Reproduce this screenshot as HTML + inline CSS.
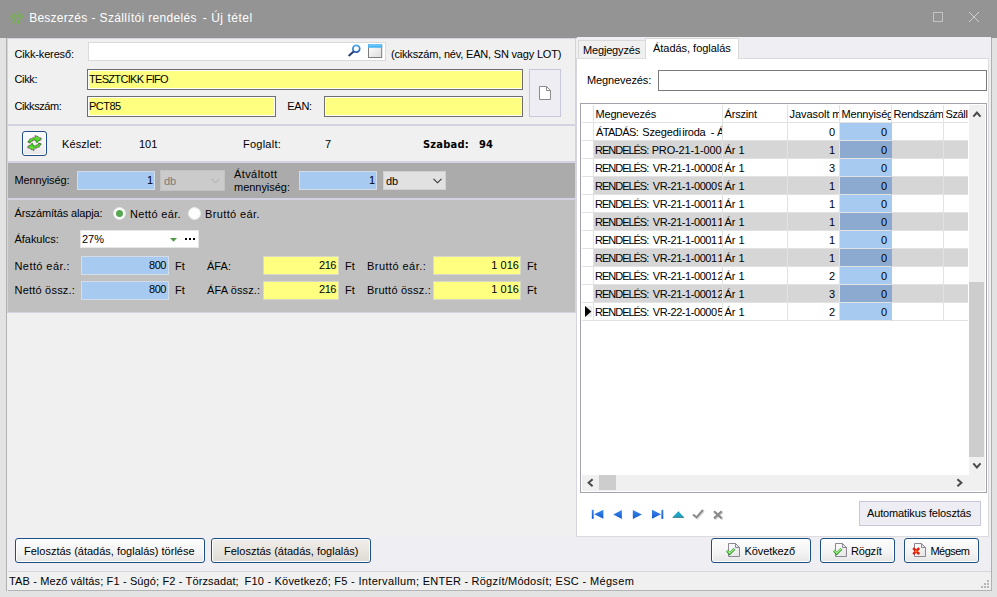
<!DOCTYPE html>
<html lang="hu"><head><meta charset="utf-8"><title>Beszerzés - Szállítói rendelés - Új tétel</title>
<style>
*{box-sizing:border-box;margin:0;padding:0}
html,body{width:997px;height:597px;overflow:hidden}
body{position:relative;background:#e3e3e3;font-family:"Liberation Sans","DejaVu Sans",sans-serif;font-size:11px;color:#000;line-height:13px}
.a{position:absolute}
.t{position:absolute;white-space:nowrap;line-height:13px;height:13px}
.b{font-weight:bold;font-family:"DejaVu Sans Condensed","Liberation Sans",sans-serif}
.r{text-align:right}
#title{left:0;top:0;width:997px;height:38px;background:#949494}
#title .cap{left:30px;top:10px;font-size:12px;color:#fff;line-height:16px;height:16px;}
#client{left:6px;top:38px;width:986px;height:553px;background:#f0f0f0;border-left:1px solid #b0b0b0;border-right:1px solid #b0b0b0}
.pan{position:absolute;border:1px solid #d3d3e3}
.inp{position:absolute;border:1px solid #d9d9d9;background:#fff}
.yel{background:#ffff80;border:1px solid #6e6e6e;box-shadow:inset 0 0 0 1px #fff}
.yel2{background:#ffff80;border:1px solid #d8d8c8}
.blu{background:#a6caf0;border:1px solid #d4dce8}
.btn{position:absolute;border:1px solid #1f4e82;border-radius:3px;background:linear-gradient(#fdfdfd,#f3f3f3 60%,#e6e6e6);box-shadow:inset 0 0 0 1px #fff}
.gh{height:18px;line-height:18px;padding:0 0 0 1.5px;white-space:nowrap;overflow:hidden;border-right:1px solid #e2e2e2;border-bottom:1px solid #e2e2e2}
.gc{line-height:17px;height:18px;padding:1px 0 0 1.5px;white-space:nowrap;overflow:hidden;border-right:1px solid #e2e2e2;border-bottom:1px solid #e2e2e2}
</style></head><body>
<div id="title" class="a">
 <svg class="a" style="left:8px;top:10px" width="18" height="16" viewBox="0 0 18 16"><g fill="none" stroke="#72b446" stroke-width="1.35" stroke-linecap="round"><path d="M4.3 4.1 Q9.1 8.6 13.9 3.9"/><path d="M2.9 6.4 Q7.9 7.6 7.3 13.4"/><path d="M15.1 6.4 Q10.1 7.6 10.6 13.4"/></g><g fill="#72b446"><circle cx="7.6" cy="2.4" r=".75"/><circle cx="10.7" cy="2.4" r=".75"/><circle cx="3" cy="9.7" r=".75"/><circle cx="4.6" cy="12.2" r=".75"/><circle cx="15.2" cy="9.8" r=".75"/><circle cx="13.5" cy="12.4" r=".75"/></g></svg>
 <span class="t cap" style="letter-spacing:0.24px;left:29.2px">Beszerzés</span> <span class="t cap" style="letter-spacing:0.33px;left:91.6px">- Szállítói rendelés</span> <span class="t cap" style="letter-spacing:0.52px;left:202.8px">- Új tétel</span>
 <div class="a" style="left:933px;top:12px;width:10px;height:10px;border:1px solid #c4c4c4"></div>
 <svg class="a" style="left:968px;top:11px" width="12" height="12" viewBox="0 0 12 12"><path d="M1 1 L11 11 M11 1 L1 11" stroke="#cfcfcf" stroke-width="1" fill="none"/></svg>
</div>
<div id="client" class="a"></div>
<div class="a" style="left:8px;top:537px;width:983px;height:34px;background:#eeeef3"></div>
<!-- LEFT -->
<div id="left" class="a" style="left:8px;top:37px;width:569px;height:534px">
 <div class="pan" style="left:-1px;top:1px;width:569px;height:87px"></div>
 <div class="pan" style="left:-1px;top:88px;width:569px;height:37px"></div>
 <div class="pan" style="left:-1px;top:125px;width:569px;height:37px;background:#ababab"></div>
 <div class="pan" style="left:-1px;top:162px;width:569px;height:114px;background:#c0c0c0"></div>
 <span class="t" style="letter-spacing:-0.15px;left:6.5px;top:11px">Cikk-kereső:</span>
 <div class="inp" style="left:80px;top:5px;width:298px;height:19px;border-color:#dadada"></div>
 <svg class="a" style="left:340px;top:7px" width="14" height="13" viewBox="0 0 14 13"><defs><linearGradient id="mg" x1="0" y1="0" x2="0" y2="1"><stop offset="0" stop-color="#48a8e8"/><stop offset="1" stop-color="#2456b0"/></linearGradient></defs><path d="M5.6 7.6 L1.2 11.4" stroke="#223a78" stroke-width="2" stroke-linecap="round"/><circle cx="8.3" cy="4.8" r="3.4" fill="#fff" stroke="url(#mg)" stroke-width="1.7"/></svg>
 <svg class="a" style="left:360px;top:7px" width="15" height="14" viewBox="0 0 15 14"><defs><linearGradient id="wg" x1="0" y1="0" x2="1" y2="1"><stop offset="0" stop-color="#fff"/><stop offset="1" stop-color="#dcdcdc"/></linearGradient></defs><rect x=".5" y=".5" width="13.2" height="13" fill="url(#wg)" stroke="#7c7c7c"/><path d="M0 1.2 Q0 0 1.2 0 H13 Q14.2 0 14.2 1.2 V3.8 H0 Z" fill="#4ab4f2"/><path d="M.6 1 H13.6" stroke="#8fd4fa" stroke-width="1"/></svg>
 <span class="t" style="letter-spacing:-0.19px;left:383px;top:11px;">(cikkszám, név, EAN, SN vagy LOT)</span>
 <span class="t" style="letter-spacing:-0.35px;left:6.5px;top:36px">Cikk:</span>
 <div class="inp yel" style="left:79px;top:32px;width:436px;height:21px"></div>
 <span class="t" style="letter-spacing:-0.69px;left:81px;top:36px">TESZTCIKK FIFO</span>
 <span class="t" style="letter-spacing:-0.44px;left:6.5px;top:63px">Cikkszám:</span>
 <div class="inp yel" style="left:79px;top:59px;width:189px;height:21px"></div>
 <span class="t" style="letter-spacing:-0.5px;left:81px;top:63px">PCT85</span>
 <span class="t" style="letter-spacing:-0.23px;left:279.2px;top:63px">EAN:</span>
 <div class="inp yel" style="left:316px;top:59px;width:199px;height:21px"></div>
 <div class="a" style="left:521px;top:32px;width:32px;height:48px;background:#ededf3;border:1px solid #c8c8dc"></div>
 <svg class="a" style="left:531px;top:49px" width="12" height="14" viewBox="0 0 12 14"><path d="M.5 .5 H7.5 L11.5 4.5 V13.5 H.5 Z" fill="#fff" stroke="#8a8a8a"/><path d="M7.5 .5 V4.5 H11.5" fill="none" stroke="#8a8a8a"/></svg>
 <div class="btn" style="left:14px;top:94px;width:25px;height:25px"></div>
 <svg class="a" style="left:19px;top:98px" width="16" height="17" viewBox="0 0 16 17"><defs><linearGradient id="rg" x1="0" y1="0" x2="0" y2="1"><stop offset="0" stop-color="#86f04a"/><stop offset="1" stop-color="#34c414"/></linearGradient></defs><g stroke-linejoin="round"><path d="M1.3 7.4 C1.4 4.4 4.4 2.9 8.3 2.9 V0.5 L14.6 3.9 L9.4 7.6 L8.6 5 C6.4 4.9 4.4 5.6 3.5 7.6 Z" fill="none" stroke="#e828d8" stroke-width="1.7" stroke-dasharray="1 2.4"/><path d="M1.3 7.4 C1.4 4.4 4.4 2.9 8.3 2.9 V0.5 L14.6 3.9 L9.4 7.6 L8.6 5 C6.4 4.9 4.4 5.6 3.5 7.6 Z" fill="none" stroke="#e828d8" stroke-width="1.7" stroke-dasharray="1 2.4" transform="rotate(180 7.5 8)"/><path d="M1.3 7.4 C1.4 4.4 4.4 2.9 8.3 2.9 V0.5 L14.6 3.9 L9.4 7.6 L8.6 5 C6.4 4.9 4.4 5.6 3.5 7.6 Z" fill="url(#rg)" stroke="#237d14" stroke-width=".7"/><path d="M1.3 7.4 C1.4 4.4 4.4 2.9 8.3 2.9 V0.5 L14.6 3.9 L9.4 7.6 L8.6 5 C6.4 4.9 4.4 5.6 3.5 7.6 Z" fill="url(#rg)" stroke="#237d14" stroke-width=".7" transform="rotate(180 7.5 8)"/></g></svg>
 <span class="t" style="letter-spacing:0.1px;left:54px;top:101px">Készlet:</span>
 <span class="t" style="left:131px;top:101px">101</span>
 <span class="t" style="letter-spacing:0.24px;left:235px;top:101px">Foglalt:</span>
 <span class="t" style="left:317px;top:101px">7</span>
 <span class="t b" style="letter-spacing:0.23px;left:415px;top:101px">Szabad:</span>
 <span class="t b" style="letter-spacing:0.2px;left:471px;top:101px">94</span>
 <span class="t" style="letter-spacing:-0.14px;left:6.5px;top:137px">Mennyiség:</span>
 <div class="inp blu" style="left:69px;top:134px;width:78px;height:19px"></div>
 <span class="t r" style="left:69px;top:137px;width:76px">1</span>
 <div class="inp" style="left:152px;top:133px;width:65px;height:21px;background:#cbcbcb;border-color:#c2c2c2"></div>
 <span class="t" style="left:156px;top:138px;color:#7a7a7a">db</span>
 <svg class="a" style="left:203px;top:141px" width="9" height="6" viewBox="0 0 9 6"><path d="M.5 .8 L4.5 4.8 L8.5 .8" fill="none" stroke="#a8a8a8" stroke-width="1"/></svg>
 <span class="t" style="letter-spacing:0.41px;left:226px;top:131px">Átváltott</span>
 <span class="t" style="letter-spacing:-0.03px;left:226px;top:144px">mennyiség:</span>
 <div class="inp blu" style="left:291px;top:134px;width:78px;height:19px"></div>
 <span class="t r" style="left:291px;top:137px;width:76px">1</span>
 <div class="inp" style="left:375px;top:134px;width:63px;height:19px;background:#e1e1e1;border-color:#d0d0d0"></div>
 <span class="t" style="left:378px;top:138px">db</span>
 <svg class="a" style="left:425px;top:141px" width="9" height="6" viewBox="0 0 9 6"><path d="M.5 .8 L4.5 4.8 L8.5 .8" fill="none" stroke="#333" stroke-width="1.1"/></svg>
 <span class="t" style="letter-spacing:-0.14px;left:6.5px;top:170px">Árszámítás alapja:</span>
 <div class="a" style="left:105px;top:170px;width:13px;height:13px;border-radius:50%;background:#fff;border:1px solid #dfe8df"></div>
 <div class="a" style="left:108px;top:173px;width:7px;height:7px;border-radius:50%;background:#55a84f"></div>
 <span class="t" style="letter-spacing:0.33px;left:122px;top:171px;">Nettó eár.</span>
 <div class="a" style="left:180px;top:170px;width:13px;height:13px;border-radius:50%;background:#fff;border:1px solid #e3ece3"></div>
 <span class="t" style="letter-spacing:0.37px;left:197px;top:171px;">Bruttó eár.</span>
 <span class="t" style="letter-spacing:-0.04px;left:6.5px;top:196px">Áfakulcs:</span>
 <div class="inp" style="left:72px;top:193px;width:119px;height:18px;border-color:#e6e6e6"></div>
 <span class="t" style="letter-spacing:-0.05px;left:74px;top:196px">27%</span>
 <svg class="a" style="left:162px;top:201px" width="7" height="4" viewBox="0 0 7 4"><path d="M0 0 H7 L3.5 3.8 Z" fill="#4e9a46"/></svg>
 <div class="a" style="left:177px;top:201px;width:2px;height:2px;background:#000;box-shadow:4px 0 #000,8px 0 #000"></div>
 <span class="t" style="letter-spacing:0.42px;left:6.5px;top:223px">Nettó eár.:</span>
 <div class="inp blu" style="left:73px;top:219px;width:88px;height:19px"></div>
 <span class="t r" style="letter-spacing:-0.45px;left:73px;top:222px;width:85px">800</span>
 <span class="t" style="left:167px;top:223px">Ft</span>
 <span class="t" style="letter-spacing:0.03px;left:199px;top:223px">ÁFA:</span>
 <div class="inp yel2" style="left:255px;top:219px;width:76px;height:19px"></div>
 <span class="t r" style="letter-spacing:-0.45px;left:255px;top:222px;width:73px">216</span>
 <span class="t" style="left:337px;top:223px">Ft</span>
 <span class="t" style="letter-spacing:0.45px;left:359px;top:223px">Bruttó eár.:</span>
 <div class="inp yel2" style="left:425px;top:219px;width:88px;height:19px"></div>
 <span class="t r" style="letter-spacing:0.03px;left:425px;top:222px;width:86px">1 016</span>
 <span class="t" style="left:519px;top:223px">Ft</span>
 <span class="t" style="letter-spacing:0.21px;left:6.5px;top:247px">Nettó össz.:</span>
 <div class="inp blu" style="left:73px;top:244px;width:88px;height:19px"></div>
 <span class="t r" style="letter-spacing:-0.45px;left:73px;top:246px;width:85px">800</span>
 <span class="t" style="left:167px;top:247px">Ft</span>
 <span class="t" style="letter-spacing:0.12px;left:199px;top:247px">ÁFA össz.:</span>
 <div class="inp yel2" style="left:255px;top:244px;width:76px;height:19px"></div>
 <span class="t r" style="letter-spacing:-0.45px;left:255px;top:246px;width:73px">216</span>
 <span class="t" style="left:337px;top:247px">Ft</span>
 <span class="t" style="letter-spacing:0.23px;left:359px;top:247px">Bruttó össz.:</span>
 <div class="inp yel2" style="left:425px;top:244px;width:88px;height:19px"></div>
 <span class="t r" style="letter-spacing:0.03px;left:425px;top:246px;width:86px">1 016</span>
 <span class="t" style="left:519px;top:247px">Ft</span>
</div>
<!-- RIGHT -->
<div id="right" class="a" style="left:577px;top:37px;width:414px;height:534px">
<div class="a" style="left:0;top:0;width:414px;height:22px;background:#eeeef3"></div>
<div class="a" style="left:-1px;top:21px;width:413px;height:479px;background:#fff;border:1px solid #dcdcdc;border-left-color:#d6d6e2"></div>
<div class="a" style="left:1px;top:3px;width:68px;height:18px;background:#f0f0f0;border:1px solid #d9d9d9;border-bottom:none"></div>
<span class="t" style="letter-spacing:-0.17px;left:6px;top:7px">Megjegyzés</span>
<div class="a" style="left:68px;top:1px;width:94px;height:21px;background:#fff;border:1px solid #d9d9d9;border-bottom:none"></div>
<span class="t" style="letter-spacing:-0.03px;left:76px;top:5px">Átadás, foglalás</span>
<span class="t" style="letter-spacing:-0.12px;left:10px;top:37px">Megnevezés:</span>
<div class="inp" style="left:81px;top:33px;width:329px;height:21px;border-color:#7a7a7a"></div>
<!--GRID-->
<div id="grid" class="a" style="left:3px;top:66px;width:407px;height:390px;background:#fff;border:1px solid #a3a3ad;overflow:hidden">
<div class="a gh" style="left:1px;top:1px;width:12px"></div>
<div class="a gh" style="letter-spacing:-0.18px;left:13px;top:1px;width:129px">Megnevezés</div>
<div class="a gh" style="letter-spacing:-0.17px;left:142px;top:1px;width:65px">Árszint</div>
<div class="a gh" style="letter-spacing:-0.06px;left:207px;top:1px;width:52px">Javasolt m</div>
<div class="a gh" style="letter-spacing:-0.19px;left:259px;top:1px;width:52px">Mennyiség</div>
<div class="a gh" style="letter-spacing:-0.31px;left:311px;top:1px;width:52px">Rendszám</div>
<div class="a gh" style="letter-spacing:-0.38px;left:363px;top:1px;width:24px;border-right:none">Száll</div>
<div class="a" style="left:13px;top:19px;width:374px;height:17px;background:#fff"></div>
<div class="a gc" style="left:1px;top:19px;width:12px"></div>
<div class="a gc" style="left:13px;top:19px;width:129px"><span class="t" style="letter-spacing:-0.57px;left:1.9px;top:3px">ÁTADÁS:</span> <span class="t" style="letter-spacing:-0.13px;left:48.2px;top:3px">Szegedi</span> <span class="t" style="letter-spacing:-0.28px;left:88.3px;top:3px">iroda</span> <span class="t" style="left:116.8px;top:3px">-</span> <span class="t" style="left:123.1px;top:3px">Á</span></div>
<div class="a gc" style="left:142px;top:19px;width:65px"></div>
<div class="a gc r" style="left:207px;top:19px;width:52px;padding-right:4px">0</div>
<div class="a gc r" style="left:259px;top:19px;width:52px;padding-right:4px;background:#a6caf0;border-right-color:#a6caf0">0</div>
<div class="a gc" style="left:311px;top:19px;width:52px"></div>
<div class="a gc" style="left:363px;top:19px;width:24px;border-right:none"></div>
<div class="a" style="left:13px;top:37px;width:374px;height:17px;background:#d6d6d6"></div>
<div class="a gc" style="left:1px;top:37px;width:12px"></div>
<div class="a gc" style="left:13px;top:37px;width:129px"><span class="t" style="letter-spacing:-1.03px;left:1.1px;top:3px">RENDELÉS:</span> <span class="t" style="letter-spacing:-0.15px;left:57.7px;top:3px">PRO-21-1-000</span></div>
<div class="a gc" style="letter-spacing:0.0px;left:142px;top:37px;width:65px">Ár 1</div>
<div class="a gc r" style="left:207px;top:37px;width:52px;padding-right:4px">1</div>
<div class="a gc r" style="left:259px;top:37px;width:52px;padding-right:4px;background:#8caad0;border-right-color:#8caad0">0</div>
<div class="a gc" style="left:311px;top:37px;width:52px"></div>
<div class="a gc" style="left:363px;top:37px;width:24px;border-right:none"></div>
<div class="a" style="left:13px;top:55px;width:374px;height:17px;background:#fff"></div>
<div class="a gc" style="left:1px;top:55px;width:12px"></div>
<div class="a gc" style="left:13px;top:55px;width:129px"><span class="t" style="letter-spacing:-1.03px;left:1.1px;top:3px">RENDELÉS:</span> <span class="t" style="letter-spacing:-0.43px;left:58.8px;top:3px">VR-21-1-0000</span><span class="t" style="left:123.4px;top:3px">8</span></div>
<div class="a gc" style="letter-spacing:0.0px;left:142px;top:55px;width:65px">Ár 1</div>
<div class="a gc r" style="left:207px;top:55px;width:52px;padding-right:4px">3</div>
<div class="a gc r" style="left:259px;top:55px;width:52px;padding-right:4px;background:#a6caf0;border-right-color:#a6caf0">0</div>
<div class="a gc" style="left:311px;top:55px;width:52px"></div>
<div class="a gc" style="left:363px;top:55px;width:24px;border-right:none"></div>
<div class="a" style="left:13px;top:73px;width:374px;height:17px;background:#d6d6d6"></div>
<div class="a gc" style="left:1px;top:73px;width:12px"></div>
<div class="a gc" style="left:13px;top:73px;width:129px"><span class="t" style="letter-spacing:-1.03px;left:1.1px;top:3px">RENDELÉS:</span> <span class="t" style="letter-spacing:-0.43px;left:58.8px;top:3px">VR-21-1-0000</span><span class="t" style="left:123.4px;top:3px">9</span></div>
<div class="a gc" style="letter-spacing:0.0px;left:142px;top:73px;width:65px">Ár 1</div>
<div class="a gc r" style="left:207px;top:73px;width:52px;padding-right:4px">1</div>
<div class="a gc r" style="left:259px;top:73px;width:52px;padding-right:4px;background:#8caad0;border-right-color:#8caad0">0</div>
<div class="a gc" style="left:311px;top:73px;width:52px"></div>
<div class="a gc" style="left:363px;top:73px;width:24px;border-right:none"></div>
<div class="a" style="left:13px;top:91px;width:374px;height:17px;background:#fff"></div>
<div class="a gc" style="left:1px;top:91px;width:12px"></div>
<div class="a gc" style="left:13px;top:91px;width:129px"><span class="t" style="letter-spacing:-1.03px;left:1.1px;top:3px">RENDELÉS:</span> <span class="t" style="letter-spacing:-0.43px;left:58.8px;top:3px">VR-21-1-0001</span><span class="t" style="left:123.4px;top:3px">1</span></div>
<div class="a gc" style="letter-spacing:0.0px;left:142px;top:91px;width:65px">Ár 1</div>
<div class="a gc r" style="left:207px;top:91px;width:52px;padding-right:4px">1</div>
<div class="a gc r" style="left:259px;top:91px;width:52px;padding-right:4px;background:#a6caf0;border-right-color:#a6caf0">0</div>
<div class="a gc" style="left:311px;top:91px;width:52px"></div>
<div class="a gc" style="left:363px;top:91px;width:24px;border-right:none"></div>
<div class="a" style="left:13px;top:109px;width:374px;height:17px;background:#d6d6d6"></div>
<div class="a gc" style="left:1px;top:109px;width:12px"></div>
<div class="a gc" style="left:13px;top:109px;width:129px"><span class="t" style="letter-spacing:-1.03px;left:1.1px;top:3px">RENDELÉS:</span> <span class="t" style="letter-spacing:-0.43px;left:58.8px;top:3px">VR-21-1-0001</span><span class="t" style="left:123.4px;top:3px">1</span></div>
<div class="a gc" style="letter-spacing:0.0px;left:142px;top:109px;width:65px">Ár 1</div>
<div class="a gc r" style="left:207px;top:109px;width:52px;padding-right:4px">1</div>
<div class="a gc r" style="left:259px;top:109px;width:52px;padding-right:4px;background:#8caad0;border-right-color:#8caad0">0</div>
<div class="a gc" style="left:311px;top:109px;width:52px"></div>
<div class="a gc" style="left:363px;top:109px;width:24px;border-right:none"></div>
<div class="a" style="left:13px;top:127px;width:374px;height:17px;background:#fff"></div>
<div class="a gc" style="left:1px;top:127px;width:12px"></div>
<div class="a gc" style="left:13px;top:127px;width:129px"><span class="t" style="letter-spacing:-1.03px;left:1.1px;top:3px">RENDELÉS:</span> <span class="t" style="letter-spacing:-0.43px;left:58.8px;top:3px">VR-21-1-0001</span><span class="t" style="left:123.4px;top:3px">1</span></div>
<div class="a gc" style="letter-spacing:0.0px;left:142px;top:127px;width:65px">Ár 1</div>
<div class="a gc r" style="left:207px;top:127px;width:52px;padding-right:4px">1</div>
<div class="a gc r" style="left:259px;top:127px;width:52px;padding-right:4px;background:#a6caf0;border-right-color:#a6caf0">0</div>
<div class="a gc" style="left:311px;top:127px;width:52px"></div>
<div class="a gc" style="left:363px;top:127px;width:24px;border-right:none"></div>
<div class="a" style="left:13px;top:145px;width:374px;height:17px;background:#d6d6d6"></div>
<div class="a gc" style="left:1px;top:145px;width:12px"></div>
<div class="a gc" style="left:13px;top:145px;width:129px"><span class="t" style="letter-spacing:-1.03px;left:1.1px;top:3px">RENDELÉS:</span> <span class="t" style="letter-spacing:-0.43px;left:58.8px;top:3px">VR-21-1-0001</span><span class="t" style="left:123.4px;top:3px">1</span></div>
<div class="a gc" style="letter-spacing:0.0px;left:142px;top:145px;width:65px">Ár 1</div>
<div class="a gc r" style="left:207px;top:145px;width:52px;padding-right:4px">1</div>
<div class="a gc r" style="left:259px;top:145px;width:52px;padding-right:4px;background:#8caad0;border-right-color:#8caad0">0</div>
<div class="a gc" style="left:311px;top:145px;width:52px"></div>
<div class="a gc" style="left:363px;top:145px;width:24px;border-right:none"></div>
<div class="a" style="left:13px;top:163px;width:374px;height:17px;background:#fff"></div>
<div class="a gc" style="left:1px;top:163px;width:12px"></div>
<div class="a gc" style="left:13px;top:163px;width:129px"><span class="t" style="letter-spacing:-1.03px;left:1.1px;top:3px">RENDELÉS:</span> <span class="t" style="letter-spacing:-0.43px;left:58.8px;top:3px">VR-21-1-0001</span><span class="t" style="left:123.4px;top:3px">2</span></div>
<div class="a gc" style="letter-spacing:0.0px;left:142px;top:163px;width:65px">Ár 1</div>
<div class="a gc r" style="left:207px;top:163px;width:52px;padding-right:4px">2</div>
<div class="a gc r" style="left:259px;top:163px;width:52px;padding-right:4px;background:#a6caf0;border-right-color:#a6caf0">0</div>
<div class="a gc" style="left:311px;top:163px;width:52px"></div>
<div class="a gc" style="left:363px;top:163px;width:24px;border-right:none"></div>
<div class="a" style="left:13px;top:181px;width:374px;height:17px;background:#d6d6d6"></div>
<div class="a gc" style="left:1px;top:181px;width:12px"></div>
<div class="a gc" style="left:13px;top:181px;width:129px"><span class="t" style="letter-spacing:-1.03px;left:1.1px;top:3px">RENDELÉS:</span> <span class="t" style="letter-spacing:-0.43px;left:58.8px;top:3px">VR-21-1-0001</span><span class="t" style="left:123.4px;top:3px">2</span></div>
<div class="a gc" style="letter-spacing:0.0px;left:142px;top:181px;width:65px">Ár 1</div>
<div class="a gc r" style="left:207px;top:181px;width:52px;padding-right:4px">3</div>
<div class="a gc r" style="left:259px;top:181px;width:52px;padding-right:4px;background:#8caad0;border-right-color:#8caad0">0</div>
<div class="a gc" style="left:311px;top:181px;width:52px"></div>
<div class="a gc" style="left:363px;top:181px;width:24px;border-right:none"></div>
<div class="a" style="left:13px;top:199px;width:374px;height:17px;background:#fff"></div>
<div class="a gc" style="left:1px;top:199px;width:12px"></div>
<div class="a gc" style="left:13px;top:199px;width:129px"><span class="t" style="letter-spacing:-1.03px;left:1.1px;top:3px">RENDELÉS:</span> <span class="t" style="letter-spacing:-0.43px;left:58.8px;top:3px">VR-22-1-0000</span><span class="t" style="left:123.4px;top:3px">5</span></div>
<div class="a gc" style="letter-spacing:0.0px;left:142px;top:199px;width:65px">Ár 1</div>
<div class="a gc r" style="left:207px;top:199px;width:52px;padding-right:4px">2</div>
<div class="a gc r" style="left:259px;top:199px;width:52px;padding-right:4px;background:#a6caf0;border-right-color:#a6caf0">0</div>
<div class="a gc" style="left:311px;top:199px;width:52px"></div>
<div class="a gc" style="left:363px;top:199px;width:24px;border-right:none"></div>
<div class="a" style="left:4px;top:202px;width:7px;height:11px;background:#ececec"></div>
<svg class="a" style="left:4px;top:202px" width="7" height="11" viewBox="0 0 7 11"><path d="M0 0 L6.3 5.5 L0 11 Z" fill="#000"/></svg>
<div class="a" style="left:388px;top:1px;width:16px;height:370px;background:#f0f0f0"></div>
<svg class="a" style="left:391px;top:6px" width="10" height="8" viewBox="0 0 10 8"><path d="M1.3 6.6 L4.9 2.6 L8.5 6.6" fill="none" stroke="#4a4a4a" stroke-width="2"/></svg>
<svg class="a" style="left:391px;top:358px" width="10" height="8" viewBox="0 0 10 8"><path d="M1.3 1.4 L4.9 5.4 L8.5 1.4" fill="none" stroke="#4a4a4a" stroke-width="2"/></svg>
<div class="a" style="left:388px;top:178px;width:15px;height:175px;background:#cdcdcd"></div>
<div class="a" style="left:1px;top:371px;width:403px;height:16px;background:#f0f0f0"></div>
<svg class="a" style="left:5px;top:374px" width="8" height="10" viewBox="0 0 8 10"><path d="M6.6 1.2 L2.6 4.7 L6.6 8.2" fill="none" stroke="#4a4a4a" stroke-width="2"/></svg>
<svg class="a" style="left:375px;top:374px" width="8" height="10" viewBox="0 0 8 10"><path d="M1.4 1.2 L5.4 4.7 L1.4 8.2" fill="none" stroke="#4a4a4a" stroke-width="2"/></svg>
<div class="a" style="left:18px;top:371px;width:17px;height:15px;background:#cdcdcd"></div>
</div>
<!--/GRID-->
<svg class="a" style="left:13px;top:471px" width="136" height="14" viewBox="0 0 136 14">
<defs><linearGradient id="bg" x1="0" y1="0" x2="0" y2="1"><stop offset="0" stop-color="#3c8af4"/><stop offset="1" stop-color="#1458c8"/></linearGradient></defs>
<g fill="url(#bg)"><rect x="1.8" y="1.8" width="1.9" height="9"/><path d="M13.4 1.8 V10.8 L4.2 6.3 Z"/>
<path d="M31.9 2 V11 L23.3 6.5 Z"/><path d="M42.8 2 V11 L51.9 6.5 Z"/>
<path d="M62 1.8 V10.8 L71 6.3 Z"/><rect x="71.4" y="1.8" width="1.9" height="9"/></g>
<path d="M82.7 9.3 L88.35 3.3 L94 9.3 Z" fill="#1ea4c4"/><path d="M82.7 9.3 H94" stroke="#2a7888" stroke-width="1" fill="none"/>
<path d="M104 7.5 L107.5 10.3 L114 3" fill="none" stroke="#dcdcdc" stroke-width="2"/>
<path d="M103 6.5 L106.5 9.3 L113 2" fill="none" stroke="#8a8a8a" stroke-width="2"/>
<path d="M125 4.2 L132.8 11.4 M132.8 4.2 L125 11.4" fill="none" stroke="#dcdcdc" stroke-width="2.2"/>
<path d="M124 3.2 L131.8 10.4 M131.8 3.2 L124 10.4" fill="none" stroke="#8a8a8a" stroke-width="2.2"/>
</svg>
<div class="a" style="left:282px;top:464px;width:122px;height:25px;background:#ededf3;border:1px solid #c8c8dc"></div>
<span class="t" style="letter-spacing:-0.14px;left:290px;top:470px">Automatikus felosztás</span>
</div>
<!-- BOTTOM -->
<div id="bottom" class="a" style="left:0;top:0;width:997px;height:597px;pointer-events:none">
<div class="btn" style="left:15px;top:538px;width:190px;height:25px;"></div>
<span class="t" style="letter-spacing:0.0px;left:24px;top:545px">Felosztás (átadás, foglalás) törlése</span>
<div class="btn" style="left:211px;top:538px;width:160px;height:25px;background:linear-gradient(#f1efec,#e6e2dc 60%,#dedad4)"></div>
<span class="t" style="letter-spacing:0.0px;left:224px;top:545px">Felosztás (átadás, foglalás)</span>
<div class="btn" style="left:711px;top:538px;width:100px;height:25px;"></div>
<span class="t" style="letter-spacing:-0.09px;left:744.5px;top:545px">Következő</span>
<div class="btn" style="left:820px;top:538px;width:75px;height:25px;"></div>
<span class="t" style="letter-spacing:-0.2px;left:851px;top:545px">Rögzít</span>
<div class="btn" style="left:904px;top:538px;width:75px;height:25px;"></div>
<span class="t" style="letter-spacing:-0.54px;left:930.5px;top:545px">Mégsem</span>
<svg class="a" style="left:726px;top:541px" width="16" height="17" viewBox="0 0 16 17"><defs><linearGradient id="dg" x1="0" y1="0" x2="1" y2="1"><stop offset="0" stop-color="#fff"/><stop offset="1" stop-color="#e4e4e6"/></linearGradient></defs><path d="M2.5 2.5 H9.5 L13.5 6.5 V15.5 H2.5 Z" fill="url(#dg)" stroke="#8c8792"/><path d="M9.5 2.5 V6.5 H13.5 Z" fill="#ececee" stroke="#8c8792" stroke-linejoin="round"/><path d="M1 9.6 L3.6 12.6 L8.4 7.8" fill="none" stroke="#2a962a" stroke-width="2.5" stroke-linejoin="miter"/><path d="M1.3 9.7 L3.6 12.2 L8.1 8" fill="none" stroke="#a8f088" stroke-width="1.2"/></svg>
<svg class="a" style="left:833px;top:541px" width="16" height="17" viewBox="0 0 16 17"><defs><linearGradient id="dg" x1="0" y1="0" x2="1" y2="1"><stop offset="0" stop-color="#fff"/><stop offset="1" stop-color="#e4e4e6"/></linearGradient></defs><path d="M2.5 2.5 H9.5 L13.5 6.5 V15.5 H2.5 Z" fill="url(#dg)" stroke="#8c8792"/><path d="M9.5 2.5 V6.5 H13.5 Z" fill="#ececee" stroke="#8c8792" stroke-linejoin="round"/><path d="M1 9.6 L3.6 12.6 L8.4 7.8" fill="none" stroke="#2a962a" stroke-width="2.5" stroke-linejoin="miter"/><path d="M1.3 9.7 L3.6 12.2 L8.1 8" fill="none" stroke="#a8f088" stroke-width="1.2"/></svg>
<svg class="a" style="left:912px;top:541px" width="16" height="17" viewBox="0 0 16 17"><defs><linearGradient id="dg" x1="0" y1="0" x2="1" y2="1"><stop offset="0" stop-color="#fff"/><stop offset="1" stop-color="#e4e4e6"/></linearGradient></defs><path d="M2.5 2.5 H9.5 L13.5 6.5 V15.5 H2.5 Z" fill="url(#dg)" stroke="#8c8792"/><path d="M9.5 2.5 V6.5 H13.5 Z" fill="#ececee" stroke="#8c8792" stroke-linejoin="round"/><path d="M1.2 7.2 L7.2 13.2 M7.2 7.2 L1.2 13.2" fill="none" stroke="#e01c10" stroke-width="2.5"/><circle cx="4.2" cy="10.2" r="1.3" fill="#ff7020"/></svg>
<div class="a" style="left:8px;top:571px;width:983px;height:20px;background:#f0f0f0;border-top:1px solid #d7d7d7;border-bottom:1px solid #b4b4b4"></div>
<span class="t" style="letter-spacing:0.13px;left:9px;top:575px">TAB - Mező váltás; F1 - Súgó; F2 - Törzsadat;</span>
<span class="t" style="letter-spacing:0.2px;left:244.6px;top:575px">F10 - Következő;</span>
<span class="t" style="letter-spacing:0.33px;left:334.2px;top:575px">F5 - Intervallum;</span>
<span class="t" style="letter-spacing:0.22px;left:422.8px;top:575px">ENTER - Rögzít/Módosít;</span>
<span class="t" style="letter-spacing:0.34px;left:555.5px;top:575px">ESC - Mégsem</span>
<div class="a" style="left:987px;top:580px;width:2px;height:2px;background:#b6b6b6;box-shadow:0 3px #b6b6b6,0 6px #b6b6b6,-3px 3px #b6b6b6,-3px 6px #b6b6b6,-6px 6px #b6b6b6"></div>
</div>
</body></html>
